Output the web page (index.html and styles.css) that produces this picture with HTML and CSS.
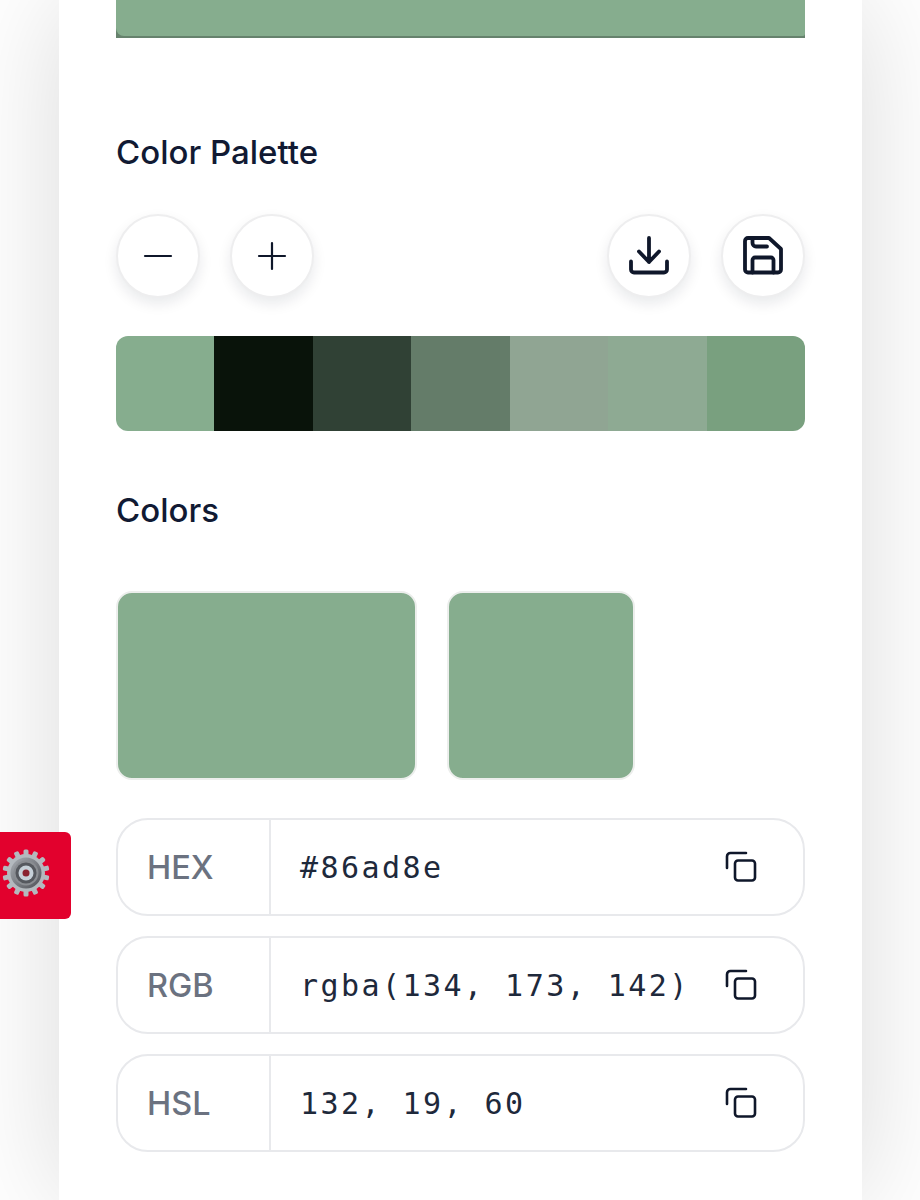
FILE: index.html
```html
<!DOCTYPE html>
<html lang="en">
<head>
  <meta charset="UTF-8">
  <meta name="viewport" content="width=device-width, initial-scale=1.0">
  <title>Color Palette</title>
  <link rel="stylesheet" href="styles.css">
</head>
<body>
  <!-- Settings tab -->
  <button class="settings-tab" aria-label="Settings">
    <svg width="50" height="50" viewBox="0 0 50 50">
      <defs>
        <linearGradient id="ring" x1="0" y1="0" x2="1" y2="1">
          <stop offset="0" stop-color="#a9adb3"/>
          <stop offset="1" stop-color="#4f5157"/>
        </linearGradient>
      </defs>
      <g fill="#b4b9be">
        <circle cx="25" cy="25" r="19"/>
        <rect x="22.500" y="1.500" width="5" height="47" rx="1.500"/>
        <rect x="22.500" y="1.500" width="5" height="47" rx="1.500" transform="rotate(25.700 25 25)"/>
        <rect x="22.500" y="1.500" width="5" height="47" rx="1.500" transform="rotate(51.400 25 25)"/>
        <rect x="22.500" y="1.500" width="5" height="47" rx="1.500" transform="rotate(77.100 25 25)"/>
        <rect x="22.500" y="1.500" width="5" height="47" rx="1.500" transform="rotate(102.800 25 25)"/>
        <rect x="22.500" y="1.500" width="5" height="47" rx="1.500" transform="rotate(128.500 25 25)"/>
        <rect x="22.500" y="1.500" width="5" height="47" rx="1.500" transform="rotate(154.200 25 25)"/>
      </g>
      <circle cx="25" cy="25" r="15.500" fill="url(#ring)"/>
      <circle cx="25" cy="25" r="12.500" fill="#8a8d92"/>
      <circle cx="25" cy="25" r="10.500" fill="#55585e"/>
      <circle cx="25" cy="25" r="7.500" fill="#c6d0d8"/>
      <circle cx="25" cy="25" r="3.500" fill="#8a2230"/>
    </svg>
  </button>

  <main class="page">
    <div class="preview"><div class="preview-fill"></div></div>

    <!-- Color Palette -->
    <h2 class="palette-title">Color Palette</h2>
    <div class="toolbar">
      <div class="toolbar-group">
        <button class="round-btn" aria-label="Remove color">
          <svg width="34" height="34" viewBox="0 0 34 34" fill="none" stroke="#0f172a" stroke-width="2.200" stroke-linecap="round"><path d="M4 17h26"/></svg>
        </button>
        <button class="round-btn" aria-label="Add color">
          <svg width="34" height="34" viewBox="0 0 34 34" fill="none" stroke="#0f172a" stroke-width="2.200" stroke-linecap="round"><path d="M4 17h26M17 4v26"/></svg>
        </button>
      </div>
      <div class="toolbar-group">
        <button class="round-btn" aria-label="Download">
          <svg width="42" height="42" viewBox="0 0 42 42" fill="none" stroke="#0f172a" stroke-width="3.800" stroke-linecap="round" stroke-linejoin="round"><path d="M21 3v24M11 16.500 21 27l10-10.500M3 26.500v8a3 3 0 0 0 3 3h30a3 3 0 0 0 3-3v-8"/></svg>
        </button>
        <button class="round-btn" aria-label="Save">
          <svg width="42" height="42" viewBox="0 0 42 42" fill="none" stroke="#0f172a" stroke-width="3.800" stroke-linecap="round" stroke-linejoin="round"><path d="M6 3h21l12 11v20.500a3 3 0 0 1-3 3H6a3 3 0 0 1-3-3V6a3 3 0 0 1 3-3z"/><path d="M10.500 3v5a3.500 3.500 0 0 0 3.500 3.500h11M10.500 37.500V25a2.500 2.500 0 0 1 2.500-2.500h16a2.500 2.500 0 0 1 2.500 2.500v12.500"/></svg>
        </button>
      </div>
    </div>

    <div class="palette-bar">
      <div class="palette-cell c1"></div>
      <div class="palette-cell c2"></div>
      <div class="palette-cell c3"></div>
      <div class="palette-cell c4"></div>
      <div class="palette-cell c5"></div>
      <div class="palette-cell c6"></div>
      <div class="palette-cell c7"></div>
    </div>

    <!-- Colors -->
    <h2 class="colors-title">Colors</h2>
    <div class="swatches">
      <div class="swatch swatch-wide"></div>
      <div class="swatch swatch-narrow"></div>
    </div>

    <div class="value-row">
      <div class="value-label">HEX</div>
      <div class="value-text">#86ad8e</div>
      <button class="copy-btn" aria-label="Copy">
        <svg width="32" height="32" viewBox="0 0 32 32" fill="none" stroke="#0f172a" stroke-width="2.600" stroke-linecap="round" stroke-linejoin="round"><rect x="10" y="9.500" width="20" height="20" rx="3"/><path d="M2 17V5.500A3.500 3.500 0 0 1 5.500 2H21"/></svg>
      </button>
    </div>
    <div class="value-row">
      <div class="value-label">RGB</div>
      <div class="value-text">rgba(134, 173, 142)</div>
      <button class="copy-btn" aria-label="Copy">
        <svg width="32" height="32" viewBox="0 0 32 32" fill="none" stroke="#0f172a" stroke-width="2.600" stroke-linecap="round" stroke-linejoin="round"><rect x="10" y="9.500" width="20" height="20" rx="3"/><path d="M2 17V5.500A3.500 3.500 0 0 1 5.500 2H21"/></svg>
      </button>
    </div>
    <div class="value-row">
      <div class="value-label">HSL</div>
      <div class="value-text">132, 19, 60</div>
      <button class="copy-btn" aria-label="Copy">
        <svg width="32" height="32" viewBox="0 0 32 32" fill="none" stroke="#0f172a" stroke-width="2.600" stroke-linecap="round" stroke-linejoin="round"><rect x="10" y="9.500" width="20" height="20" rx="3"/><path d="M2 17V5.500A3.500 3.500 0 0 1 5.500 2H21"/></svg>
      </button>
    </div>
  </main>
</body>
</html>
```

FILE: styles.css
```css
/* Global Styles */
html, body {
  height: 100%;
}

body {
  margin: 0;
  font-family: 'Inter', 'Liberation Sans', sans-serif;
  background-color: #fff;
  color: #0f172a;
  overflow: hidden;
}

/* Page card */
.page {
  box-sizing: border-box;
  width: 803px;
  height: 1200px;
  margin-left: 59px;
  padding: 0 57px;
  background-color: #fff;
  box-shadow: 0 0 110px rgba(0, 0, 0, 0.15);
}

.preview {
  height: 38px;
  background-color: #66826d;
}

.preview-fill {
  height: 36px;
  background-color: #86ad8e;
  border-radius: 0 0 2px 8px;
}

/* Settings tab */
.settings-tab {
  position: absolute;
  left: 0;
  top: 832px;
  width: 71px;
  height: 87px;
  padding: 0 0 6px 1px;
  display: flex;
  align-items: center;
  border: none;
  border-radius: 0 6px 6px 0;
  background-color: #e2012d;
  z-index: 2;
}

/* Headings */
h2 {
  margin: 0;
  font-size: 33px;
  font-weight: 450;
  line-height: 40px;
  color: #111a33;
}

.palette-title {
  padding-top: 94px;
}

.colors-title {
  margin-top: 59px;
}

/* Toolbar */
.toolbar {
  display: flex;
  justify-content: space-between;
  margin-top: 42px;
}

.toolbar-group {
  display: flex;
  gap: 30px;
}

.round-btn {
  box-sizing: border-box;
  width: 84px;
  height: 84px;
  padding: 0;
  display: flex;
  align-items: center;
  justify-content: center;
  background-color: #fff;
  border: 2px solid #eeeeef;
  border-radius: 50%;
  box-shadow: 0 6px 14px rgba(15, 23, 42, 0.09);
}

/* Palette bar */
.palette-bar {
  display: flex;
  height: 95px;
  margin-top: 38px;
  border-radius: 12px;
  overflow: hidden;
}

.palette-cell {
  flex: 1;
}

.c1 { background-color: #86ad8e; }
.c2 { background-color: #09130a; }
.c3 { background-color: #304135; }
.c4 { background-color: #647c69; }
.c5 { background-color: #90a593; }
.c6 { background-color: #8eaa93; }
.c7 { background-color: #79a07f; }

/* Swatches */
.swatches {
  display: flex;
  gap: 30px;
  margin-top: 61px;
}

.swatch {
  box-sizing: border-box;
  height: 189px;
  background-color: #86ad8e;
  border: 2px solid #eceeec;
  border-radius: 16px;
}

.swatch-wide {
  width: 301px;
}

.swatch-narrow {
  width: 188px;
}

/* Value rows */
.value-row {
  box-sizing: border-box;
  display: flex;
  align-items: center;
  height: 98px;
  margin-top: 20px;
  border: 2px solid #e8e9ec;
  border-radius: 32px;
}

.swatches + .value-row {
  margin-top: 38px;
}

.value-label {
  box-sizing: border-box;
  width: 153px;
  height: 100%;
  padding-left: 29px;
  display: flex;
  align-items: center;
  font-size: 32.500px;
  font-weight: 450;
  color: #6b7280;
  border-right: 2px solid #e8e9ec;
}

.value-text {
  flex: 1;
  padding-left: 29px;
  font-family: 'DejaVu Sans Mono', 'Liberation Mono', monospace;
  font-size: 30px;
  letter-spacing: 2.450px;
  color: #1e293b;
  white-space: nowrap;
}

.copy-btn {
  width: 32px;
  height: 32px;
  padding: 0;
  margin-right: 46px;
  background: none;
  border: none;
}
```
